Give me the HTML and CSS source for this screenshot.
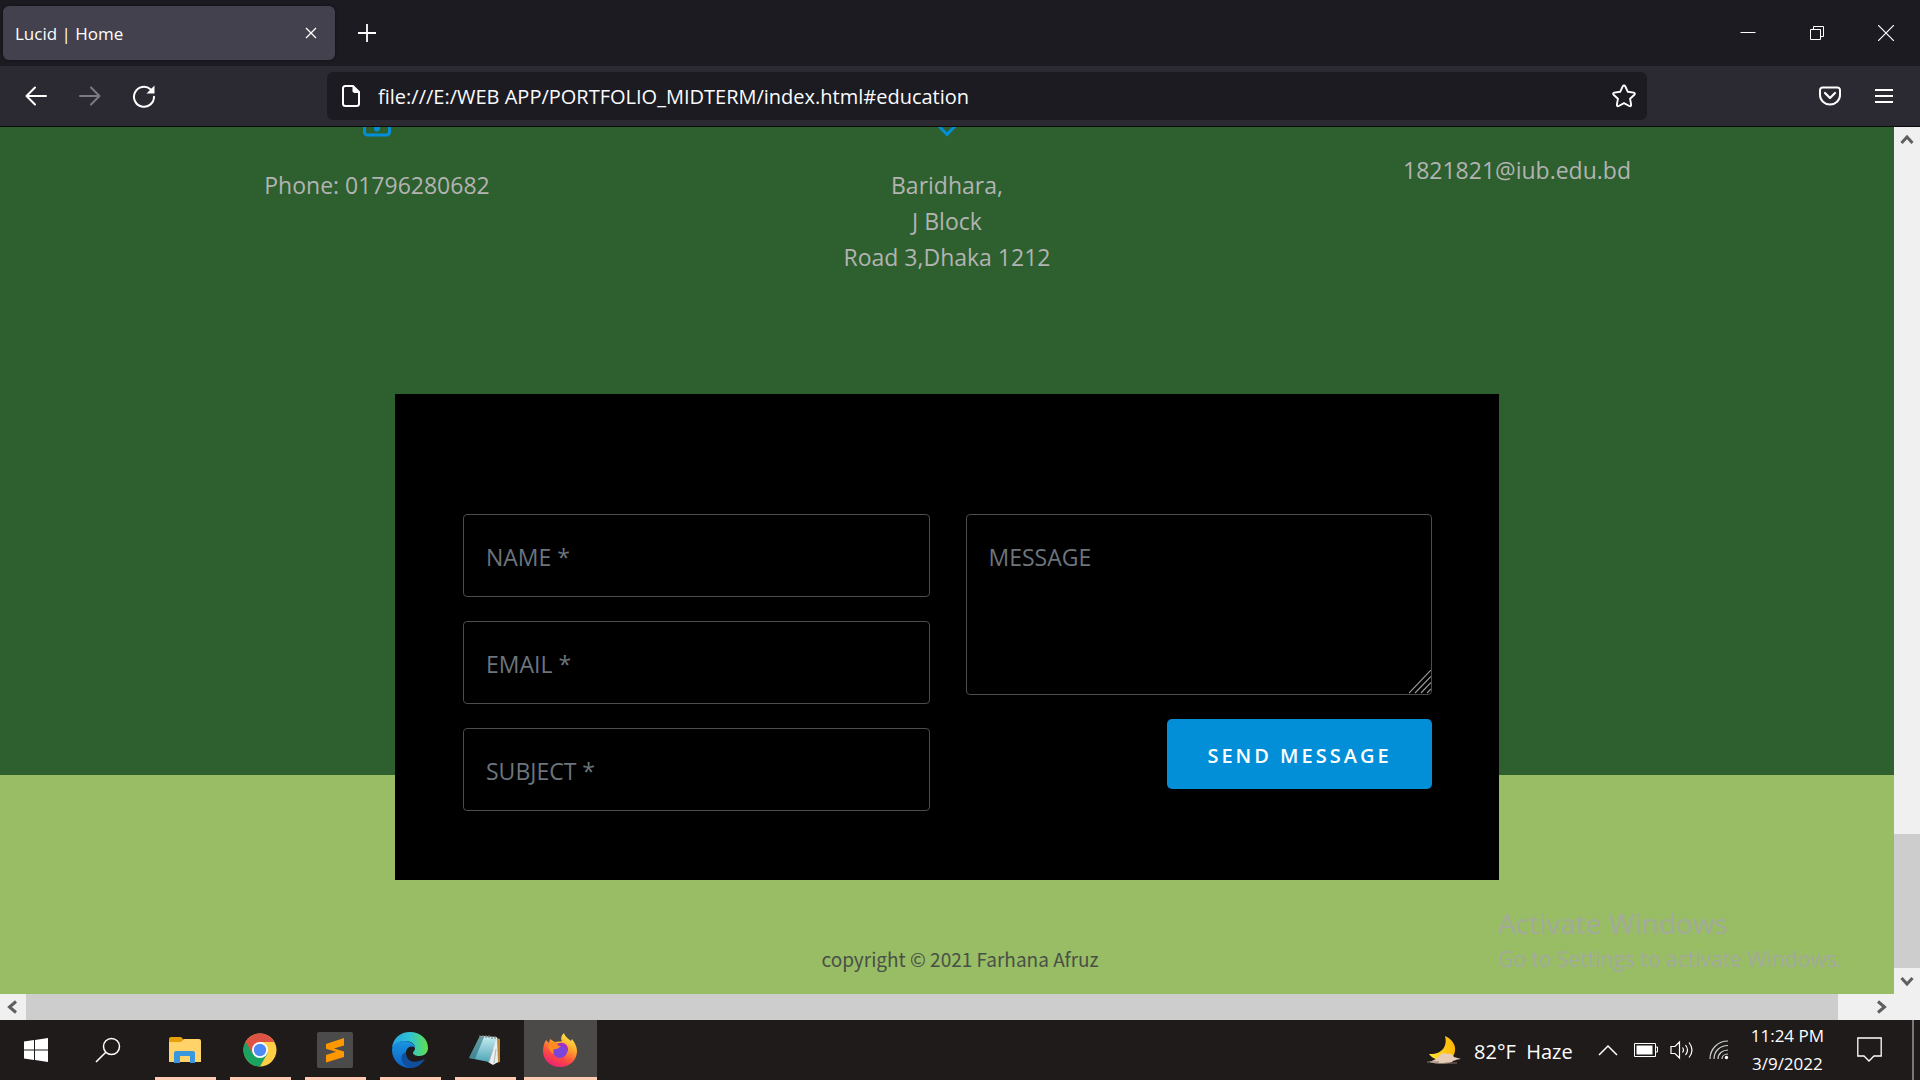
FILE: index.html
```html
<!DOCTYPE html>
<html lang="en">
<head>
<meta charset="utf-8">
<title>Lucid | Home</title>
<link rel="stylesheet" href="styles.css">
</head>
<body>
<header class="browser">
  <div class="tabbar">
    <div class="tab">
      <span class="tab-title">Lucid | Home</span>
      <button class="icon-btn" aria-label="Close tab"><svg width="12" height="12" viewBox="0 0 12 12"><path d="M1 1l10 10M11 1L1 11" stroke="#fff" stroke-width="1.3"/></svg></button>
    </div>
    <button class="icon-btn new-tab" aria-label="New tab"><svg width="18" height="18" viewBox="0 0 18 18"><path d="M9 0v18M0 9h18" stroke="#fff" stroke-width="1.8"/></svg></button>
    <div class="window-controls">
      <button class="icon-btn" aria-label="Minimize"><svg width="16" height="16" viewBox="0 0 16 16"><path d="M.5 7.5h15" stroke="#fff"/></svg></button>
      <button class="icon-btn" aria-label="Restore"><svg width="16" height="16" viewBox="0 0 16 16"><path d="M1.500 4.500h10v10h-10zM4.500 4.500v-3h10v10h-3" fill="none" stroke="#fff"/></svg></button>
      <button class="icon-btn" aria-label="Close"><svg width="16" height="16" viewBox="0 0 16 16"><path d="M0 0l16 16M16 0L0 16" stroke="#fff" stroke-width="1.2"/></svg></button>
    </div>
  </div>
  <div class="toolbar">
    <nav class="nav-buttons">
      <button class="icon-btn" aria-label="Back"><svg width="24" height="24" viewBox="0 0 24 24"><path d="M22 12H3M11 3.500L2.500 12l8.500 8.500" fill="none" stroke="#fff" stroke-width="2" stroke-linecap="round" stroke-linejoin="round"/></svg></button>
      <button class="icon-btn" aria-label="Forward"><svg width="24" height="24" viewBox="0 0 24 24"><path d="M2 12h19M13 3.500l8.500 8.500-8.500 8.500" fill="none" stroke="#7b7a81" stroke-width="2" stroke-linecap="round" stroke-linejoin="round"/></svg></button>
      <button class="icon-btn" aria-label="Reload"><svg width="24" height="24" viewBox="0 0 24 24"><path d="M18.500 5.200A10 10 0 1 0 22 12.800" fill="none" stroke="#fff" stroke-width="2" stroke-linecap="round"/><path d="M22.500 1.500v8h-8z" fill="#fff"/></svg></button>
    </nav>
    <div class="urlbar">
      <svg width="20" height="24" viewBox="0 0 20 24"><path d="M4 2h8l6 6v11.500a2.500 2.500 0 0 1-2.500 2.500h-11A2.500 2.500 0 0 1 2 19.500v-15A2.500 2.500 0 0 1 4 2z" fill="none" stroke="#fff" stroke-width="2"/><path d="M11.500 1.500L18.500 9h-5.500l-1.500-1.500z" fill="#fff"/></svg>
      <input class="url" type="text" aria-label="Address" value="file:///E:/WEB APP/PORTFOLIO_MIDTERM/index.html#education">
      <button class="icon-btn" aria-label="Bookmark"><svg width="24" height="24" viewBox="0 0 24 24"><path d="M12 1.500c.6 0 1 .3 1.300.9l2.500 5.400 5.900.8c1.200.2 1.500 1.300.7 2.100l-4.300 4.100 1 5.900c.2 1.200-.7 1.900-1.800 1.300L12 19.200 6.700 22c-1.100.6-2-.1-1.800-1.300l1-5.900-4.300-4.100c-.8-.8-.5-1.900.7-2.100l5.900-.8 2.500-5.400c.3-.6.700-.9 1.300-.9z" fill="none" stroke="#fff" stroke-width="1.900" stroke-linejoin="round"/></svg></button>
    </div>
    <div class="tool-icons">
      <button class="icon-btn" aria-label="Save to Pocket"><svg width="22" height="20" viewBox="0 0 22 20"><path d="M3.500 1.500h15a2.500 2.500 0 0 1 2.500 2.500v5a10 9.500 0 0 1-20 0V4a2.500 2.500 0 0 1 2.500-2.500z" fill="none" stroke="#fff" stroke-width="2"/><path d="M6 7l5 5 5-5" fill="none" stroke="#fff" stroke-width="2.200" stroke-linecap="round" stroke-linejoin="round"/></svg></button>
      <button class="icon-btn" aria-label="Menu"><svg width="18" height="16" viewBox="0 0 18 16"><path d="M0 2h18M0 8h18M0 14h18" stroke="#fff" stroke-width="1.800"/></svg></button>
    </div>
  </div>
</header>

<div class="viewport">
  <main class="page">
    <section class="contact" id="contact">
      <div class="details">
        <div class="detail">
          <svg class="detail-icon" width="28" height="10" viewBox="0 0 28 10"><path d="M1.500-20V5a3 3 0 0 0 3 3h19a3 3 0 0 0 3-3v-25" fill="none" stroke="#028fd8" stroke-width="3"/><circle cx="14" cy="1.500" r="3" fill="#028fd8"/></svg>
          <p>Phone: 01796280682</p>
        </div>
        <div class="detail">
          <svg class="detail-icon" width="28" height="10" viewBox="0 0 28 10"><path d="M5-2l9 9.500L23-2" fill="none" stroke="#028fd8" stroke-width="3"/></svg>
          <p>Baridhara,<br>J Block<br>Road 3,Dhaka 1212</p>
        </div>
        <div class="detail detail-email">
          <p>1821821@iub.edu.bd</p>
        </div>
      </div>
      <form class="form">
        <div class="form-col">
          <input class="field" type="text" aria-label="Name" placeholder="NAME *">
          <input class="field" type="email" aria-label="Email" placeholder="EMAIL *">
          <input class="field" type="text" aria-label="Subject" placeholder="SUBJECT *">
        </div>
        <div class="form-col">
          <div class="message-wrap">
            <textarea class="field message" aria-label="Message" placeholder="MESSAGE"></textarea>
            <svg class="grip" width="22" height="24" viewBox="0 0 22 24"><path d="M0 23L22 0M6 23L22 6.500M12 23l10-10.500M18 23l4-4" stroke="#999" stroke-width="1.200"/></svg>
          </div>
          <button class="send" type="button">SEND MESSAGE</button>
        </div>
      </form>
    </section>
    <footer class="footer">copyright © 2021 Farhana Afruz</footer>
    <aside class="watermark">
      <div class="watermark-title">Activate Windows</div>
      <div class="watermark-text">Go to Settings to activate Windows.</div>
    </aside>
  </main>
  <div class="vscroll">
    <svg width="26" height="26" viewBox="0 0 26 26"><path d="M7.500 16L13 10l5.500 6" fill="none" stroke="#5f5f5f" stroke-width="3"/></svg>
    <div class="vtrack"></div>
    <div class="vthumb"></div>
    <svg width="26" height="26" viewBox="0 0 26 26"><path d="M7.500 10l5.500 6 5.500-6" fill="none" stroke="#5f5f5f" stroke-width="3"/></svg>
  </div>
</div>
<div class="hscroll">
  <svg width="26" height="26" viewBox="0 0 26 26"><path d="M16 7.500L9.500 13l6.500 5.500" fill="none" stroke="#5f5f5f" stroke-width="3"/></svg>
  <div class="hthumb"></div>
  <svg width="26" height="26" viewBox="0 0 26 26"><path d="M10 7.500l6.500 5.500-6.500 5.500" fill="none" stroke="#5f5f5f" stroke-width="3"/></svg>
</div>

<footer class="taskbar">
  <button class="task start" aria-label="Start"><svg width="24" height="24" viewBox="0 0 24 24"><path d="M0 3.500l10-1.400v9.400H0zM11 2l13-2v11.500H11zM0 12.500h10V22L0 20.600zM11 12.500h13V24l-13-1.900z" fill="#fff"/></svg></button>
  <button class="task start" aria-label="Search"><svg width="26" height="26" viewBox="0 0 26 26"><circle cx="16.500" cy="9.500" r="8" fill="none" stroke="#fff" stroke-width="1.500"/><path d="M10.800 15.200L1 25" stroke="#fff" stroke-width="1.600"/></svg></button>
  <button class="task app" aria-label="File Explorer"><svg width="32" height="28" viewBox="0 0 32 28"><path d="M0 3a2 2 0 0 1 2-2h10l3 3-2 5H0z" fill="#e5a00d"/><path d="M0 6h12l3-3h15a2 2 0 0 1 2 2v21H0z" fill="#ffd367"/><path d="M5 27V17a2 2 0 0 1 2-2h17a2 2 0 0 1 2 2v10h-5v-7H11v7z" fill="#3a96dd"/></svg></button>
  <button class="task app" aria-label="Chrome"><svg width="34" height="34" viewBox="0 0 34 34"><circle cx="17" cy="17" r="16.500" fill="#ffcd46"/><path d="M17 17L2.700 8.700A16.500 16.500 0 0 0 17 33.500l8-14z" fill="#1aa260"/><path d="M2.700 8.700A16.500 16.500 0 0 1 31.300 9H17v8L9 20z" fill="#de5246"/><circle cx="17" cy="17" r="8" fill="#fff"/><circle cx="17" cy="17" r="6.200" fill="#4c8bf5"/></svg></button>
  <button class="task app" aria-label="Sublime Text"><svg width="36" height="36" viewBox="0 0 36 36"><rect width="36" height="36" rx="2" fill="#4b4b4b"/><path d="M9 12l18-6v7.500l-10 3 10 3V25L9 30.500V23l10-3.300-10-3z" fill="#ff9800"/></svg></button>
  <button class="task app" aria-label="Edge"><svg width="36" height="36" viewBox="0 0 36 36">
    <defs><linearGradient id="edge-top"><stop offset="0" stop-color="#25a5e0"/><stop offset=".5" stop-color="#2fc3d3"/><stop offset="1" stop-color="#62e04c"/></linearGradient><linearGradient id="edge-low" x2="0" y2="1"><stop offset="0" stop-color="#1995df"/><stop offset="1" stop-color="#0b62c5"/></linearGradient></defs>
    <path d="M0 16C1 6 8.500 0 18 0c10.500 0 18 7 18 16 0 5-4 8-8.500 8-4 0-6.500-1.500-6.500-3s2-2 2-5c0-4-4-7-10-7C7 9 3 12 0 16z" fill="url(#edge-top)"/>
    <path d="M0 18C0 12 6 9 12 9c6 0 11 3 11 7-5-4-10 1-9 7 1 6 6 10 12 10-3 2-5 3-8 3C8 36 0 28 0 18z" fill="url(#edge-low)"/>
    <path d="M14 20c-.5 7 5 11 11 9.500 3.500-.7 6-2 8-2.500C30 32 25 36 19 36c-6-1-10-6-9.500-11 .3-3 2.500-4 4.500-5z" fill="#114f9c"/></svg></button>
  <button class="task app" aria-label="Notepad"><svg width="34" height="32" viewBox="0 0 34 32"><defs><linearGradient id="pad" x2="0" y2="1"><stop offset="0" stop-color="#c9eef3"/><stop offset="1" stop-color="#4ea5b7"/></linearGradient></defs><path d="M29 4l3 1v23l-4 1z" fill="#b8862f"/><path d="M12 2l17 2 1 24-5 3-5-3z" fill="#e9eef0"/><path d="M12 2l17 1-8 25-20-4z" fill="url(#pad)"/><path d="M12 2L1 24l6 1L16 3z" fill="#286b73" opacity=".6"/><path d="M12 1v3M15 1v3M18 1v3M21 1v3M24 2v3M27 2v3" stroke="#777"/><path d="M25 15l-4 13M28 15l-2 14" stroke="#aeb7bb"/></svg></button>
  <button class="task app active" aria-label="Firefox"><svg width="34" height="34" viewBox="0 0 34 34"><defs><linearGradient id="fox" x1=".8" y1="0" x2=".3" y2="1"><stop offset="0" stop-color="#fff44f"/><stop offset=".4" stop-color="#ffa02b"/><stop offset=".7" stop-color="#ff4a42"/><stop offset="1" stop-color="#e8207a"/></linearGradient></defs><path d="M3 7l3 3 1-4c2 1 4 3 6 3 2-1 4 0 6-1-2-3 0-6 2-8 1 4 5 6 7 8l1-2c3 4 5 8 5 12 0 9-7 16-17 16S0 27 0 18c0-4 1-8 3-11z" fill="url(#fox)"/><circle cx="17" cy="17.500" r="7.500" fill="#7b45d8"/><path d="M6 11c4-3 7-2 9 0l3 2c-2 1-3 3-5 3-3 0-3 2-2 5-4-2-7-6-5-10z" fill="#ff8a20"/><path d="M17 10c5-1 9 3 8 9-1-3-4-6-8-6l-3-1z" fill="#a32fc8"/></svg></button>
  <div class="tray">
    <svg class="weather-icon" width="34" height="30" viewBox="0 0 34 30"><defs><linearGradient id="moon"><stop offset="0" stop-color="#ffe438"/><stop offset="1" stop-color="#ffb400"/></linearGradient></defs><path d="M18 1c7 3 11 9 10 15-1 8-9 11-16 9-5-1-8-3-10-6 12 1 19-7 16-18z" fill="url(#moon)"/><path d="M2 27c4-1 6-3 9-4 1-4 6-6 10-4 3-1 5 1 6 3l7 2c-5 1-7 1-9 3-5 2-16 2-23 0z" fill="#e7cdb8"/><path d="M0 27h12M18 28h12" stroke="#8a7468"/></svg>
    <span class="weather">82°F&nbsp; Haze</span>
    <svg class="chevron" width="20" height="12" viewBox="0 0 20 12"><path d="M1 11l9-9 9 9" fill="none" stroke="#fff" stroke-width="1.500"/></svg>
    <svg class="battery" width="24" height="14" viewBox="0 0 24 14"><path d="M.5.500h21v13H.5zM22 4h1.500v5H22" fill="none" stroke="#fff"/><path d="M2.500 2.500h16v9h-16z" fill="#fff"/></svg>
    <svg class="volume" width="24" height="20" viewBox="0 0 24 20"><path d="M1 6.500h4L9.500 2v16L5 13.500H1zM12.500 7.500q2 2.500 0 5M15.500 5q4 5 0 10M19 2.500q6 7.500 0 15" fill="none" stroke="#fff" stroke-width="1.200"/></svg>
    <svg class="wifi" width="20" height="20" viewBox="0 0 20 20"><path d="M1 19C1 9 9 1 19 1M5 19C5 11 11 5.500 19 5.500M9 19C9 13.500 13.500 10 19 10M13 19c0-3 2.500-5 6-5" fill="none" stroke="#d0d0d0" stroke-width="1.200"/><circle cx="17.500" cy="17.500" r="1.700" fill="#fff"/></svg>
    <div class="clock"><span>11:24 PM</span><span>3/9/2022</span></div>
    <svg class="notice" width="25" height="26" viewBox="0 0 25 26"><path d="M.8 1h23.400v18h-7.200l-5 5-5-5H.8z" fill="none" stroke="#fff" stroke-width="1.300"/></svg>
    <div class="show-desktop"></div>
  </div>
</footer>
</body>
</html>
```
FILE: styles.css
```css
* { box-sizing: border-box; }
body {
  margin: 0;
  height: 100vh;
  display: flex;
  flex-direction: column;
  overflow: hidden;
  font-family: "Open Sans", "Noto Sans", sans-serif;
  color: #fff;
}
svg { display: block; flex: none; }
p { margin: 0; }
button, input, textarea { font-family: inherit; }
.icon-btn { background: none; border: 0; padding: 0; color: #fff; }

/* Browser chrome */
.tabbar { display: flex; align-items: center; height: 66px; padding: 0 11px 0 3px; background: #1c1b22; }
.tab {
  display: flex; align-items: center; justify-content: space-between;
  width: 332px; height: 54px; padding: 0 18px 0 12px;
  background: #42414d; border-radius: 6px; box-shadow: 0 0 3px #0008;
}
.tab-title { font-size: 17px; }
.new-tab { margin-left: 23px; }
.window-controls { display: flex; gap: 53px; margin-left: auto; padding-right: 15px; }
.toolbar { display: flex; align-items: center; height: 61px; background: #2b2a33; border-bottom: 1px solid #0c0c0d; padding: 0 27px 0 24px; }
.nav-buttons { display: flex; gap: 30px; width: 303px; }
.urlbar { flex: 0 1 1320px; display: flex; align-items: center; gap: 17px; height: 48px; padding: 0 11px 0 14px; background: #1c1b22; border-radius: 6px; }
.url { flex: 1; min-width: 0; padding: 0; border: 0; outline: 0; background: none; color: #fbfbfe; font-size: 20px; }
.tool-icons { display: flex; align-items: center; gap: 34px; margin-left: auto; }

/* Page */
.viewport { flex: 1; min-height: 0; display: flex; }
.page { position: relative; flex: 1; min-width: 0; overflow: hidden; background: #98bd64; }
.contact { display: flow-root; background: #2d602e; }
.details { display: grid; grid-template-columns: repeat(3, 1fr); padding: 0 92px; min-height: 149px; }
.detail { display: flex; flex-direction: column; align-items: center; gap: 30px; text-align: center; font-size: 23px; line-height: 36px; color: #b3b3b3; }
.detail-email { padding-top: 25px; }
.form {
  position: relative;
  display: grid; grid-template-columns: 1fr 1fr; gap: 36px;
  max-width: 1104px; margin: 118px auto -105px; padding: 120px 67px 69px 68px;
  background: #000;
}
.form-col { display: flex; flex-direction: column; gap: 24px; }
.field {
  width: 100%; height: 83px; padding: 2px 22px 0;
  background: #000; border: 1px solid #4c4c4c; border-radius: 4px; outline: 0;
  color: #fff; font-size: 23px;
}
.field::placeholder { color: #6c757d; opacity: 1; }
.message-wrap { position: relative; height: 181px; }
.message { display: block; height: 181px; padding: 24px 22px; line-height: 36px; resize: none; }
.grip { position: absolute; right: 1px; bottom: 1px; }
.send {
  align-self: flex-end; width: 265px; height: 70px; padding: 2px 0 0;
  background: #028fd8; border: 0; border-radius: 5px;
  color: #fff; font-size: 20px; font-weight: 600; letter-spacing: 3px;
}
.footer { padding: 171px 0 0 26px; text-align: center; font-family: "Noto Sans CJK SC", sans-serif; font-size: 19px; line-height: 26px; color: #495047; }
.watermark { position: absolute; left: 79.100%; bottom: 18px; color: #a3a99d; white-space: nowrap; }
.watermark-title { font-size: 28px; line-height: 38px; }
.watermark-text { font-size: 21px; line-height: 34px; }

/* Scrollbars */
.vscroll { display: flex; flex-direction: column; width: 26px; background: #f0f0f0; }
.vtrack { flex: 1; }
.vthumb { height: 134px; background: #cdcdcd; }
.hscroll { display: flex; height: 26px; padding-right: 26px; background: #f0f0f0; }
.hthumb { flex: 1; margin-right: 30px; background: #cdcdcd; }

/* Taskbar */
.taskbar { display: flex; height: 60px; background: #1f1b1b; }
.task { display: flex; align-items: center; justify-content: center; padding: 0; background: none; border: 0; }
.start { width: 72px; }
.app { width: 61px; margin: 0 3px 0 11px; border-bottom: 3px solid #ffcbb3; padding: 3px 2px 0 0; }
.active { width: 73px; margin: 0 0 0 5px; background: #4c4949; }
.tray { display: flex; align-items: center; margin-left: auto; }
.weather { margin: 0 25px 0 13px; padding-top: 3px; font-size: 20px; }
.battery { margin-left: 16px; }
.volume { margin-left: 12px; }
.wifi { margin-left: 15px; }
.clock { display: flex; flex-direction: column; align-items: center; margin-left: 22px; font-size: 17px; line-height: 28px; }
.notice { margin-left: 33px; }
.show-desktop { align-self: stretch; width: 8px; margin-left: 30px; border-left: 2px solid #777; }
```
